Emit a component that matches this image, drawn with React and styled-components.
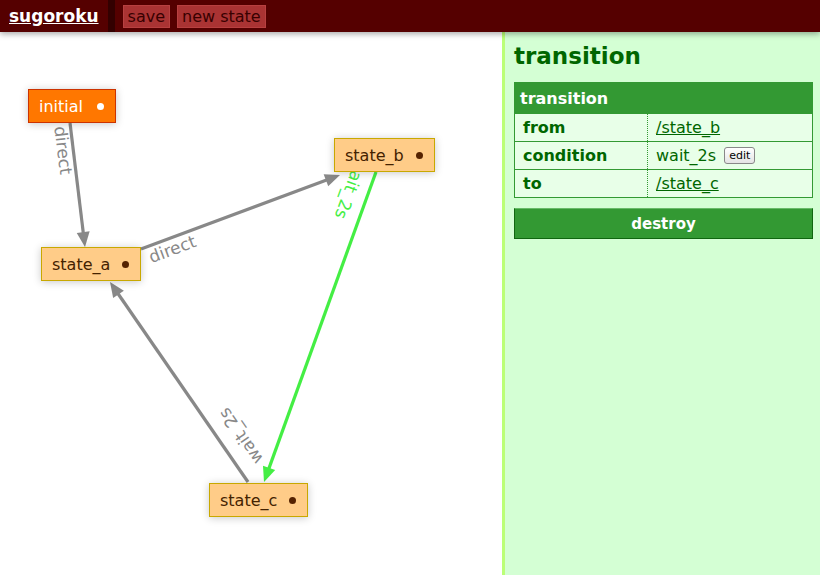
import React from 'react';
import styled, { createGlobalStyle } from 'styled-components';

const GlobalStyle = createGlobalStyle`
  html, body {
    margin: 0;
    padding: 0;
    background: #fff;
  }
  body {
    font-family: "DejaVu Sans", Verdana, sans-serif;
  }
`;

const Page = styled.div`
  width: 820px;
  height: 575px;
  display: flex;
  flex-direction: column;
  overflow: hidden;
`;

const Header = styled.header`
  position: relative;
  z-index: 2;
  height: 32px;
  flex: 0 0 32px;
  background: #550000;
  display: flex;
  align-items: center;
  box-shadow: 0 2px 6px rgba(0, 0, 0, 0.35);
`;

const Brand = styled.a`
  color: #fff;
  font-weight: bold;
  font-size: 17px;
  text-decoration: underline;
  padding: 0 9px 0 9px;
  line-height: 32px;
`;

const Separator = styled.div`
  width: 7px;
  height: 32px;
  background: #330000;
  margin-right: 8px;
`;

const MenuButton = styled.span`
  background: #aa3333;
  color: #380000;
  font-size: 16px;
  height: 23px;
  line-height: 22px;
  padding: 0 4px;
  margin-right: 7px;
  box-sizing: border-box;
  border: 1px solid #b84040;
`;

const Body = styled.div`
  flex: 1;
  display: flex;
  min-height: 0;
`;

const Canvas = styled.div`
  position: relative;
  flex: 0 0 502px;
  background: #fff;
`;

const Edges = styled.svg`
  position: absolute;
  left: 0;
  top: 0;
  width: 502px;
  height: 543px;
`;

const Node = styled.div`
  position: absolute;
  display: flex;
  align-items: center;
  height: 34px;
  box-sizing: border-box;
  padding: 0 11px 0 10px;
  font-size: 16px;
  color: ${p => (p.$initial ? '#fff' : '#442200')};
  background: ${p => (p.$initial ? '#ff7700' : '#ffcc88')};
  border: 1px solid ${p => (p.$initial ? '#cc3300' : '#c8a800')};
  box-shadow: 0 1px 8px rgba(0, 0, 0, 0.22);
  white-space: nowrap;
`;

const Dot = styled.span`
  width: 7px;
  height: 7px;
  border-radius: 50%;
  margin-left: ${p => (p.$initial ? '14px' : '12px')};
  background: ${p => (p.$initial ? '#fff' : '#552200')};
`;

const Panel = styled.aside`
  flex: 1;
  background: #d4ffd4;
  border-left: 3px solid #bbff77;
  padding: 10px 7px 0 9px;
`;

const Title = styled.h1`
  margin: 0 0 12px;
  font-size: 23px;
  line-height: 28px;
  font-weight: bold;
  color: #006600;
`;

const Table = styled.table`
  width: 299px;
  border-collapse: collapse;
  font-size: 16px;
  color: #006600;
`;

const HeadCell = styled.th`
  background: #339933;
  color: #fff;
  text-align: left;
  height: 30px;
  padding: 0 5px;
  border: 1px solid #339933;
`;

const Row = styled.tr`
  background: #e8ffe8;
  height: 28px;
`;

const Label = styled.td`
  width: 116px;
  padding: 0 8px;
  font-weight: bold;
  border: 1px solid #339933;
  border-right: 1px dotted #339933;
`;

const Value = styled.td`
  padding: 0 8px;
  border: 1px solid #339933;
  border-left: 1px dotted #339933;
`;

const Link = styled.a`
  color: #006600;
  text-decoration: underline;
`;

const EditButton = styled.span`
  display: inline-block;
  margin-left: 8px;
  padding: 0 4px;
  height: 15px;
  line-height: 15px;
  font-size: 11px;
  color: #000;
  background: linear-gradient(#fff, #e4e4e4);
  border: 1px solid #888;
  border-radius: 3px;
  vertical-align: 2px;
`;

const DestroyButton = styled.div`
  margin-top: 10px;
  width: 299px;
  height: 31px;
  box-sizing: border-box;
  background: #339933;
  border: 1px solid #116611;
  border-top-color: #66bb66;
  color: #fff;
  font-weight: bold;
  font-size: 15px;
  display: flex;
  align-items: center;
  justify-content: center;
`;

const nodes = [
  { id: 'initial', x: 28, y: 57, initial: true },
  { id: 'state_b', x: 334, y: 106 },
  { id: 'state_a', x: 41, y: 215 },
  { id: 'state_c', x: 209, y: 451 },
];

const edges = [
  { from: [70, 91], to: [85, 215], label: 'direct', color: '#888888', off: 2, drop: 16 },
  { from: [141, 217], to: [340, 143], label: 'direct', color: '#888888', off: 5, drop: 17 },
  { from: [376, 140], to: [264, 450], label: 'wait_2s', color: '#44ee44', off: -8, drop: 24 },
  { from: [248, 450], to: [110, 250], label: 'wait_2s', color: '#888888', off: 10, drop: 26 },
];

const Edge = ({ from, to, label, color, off, drop }) => {
  const dx = to[0] - from[0];
  const dy = to[1] - from[1];
  const len = Math.hypot(dx, dy);
  const ux = dx / len;
  const uy = dy / len;
  const ang = (Math.atan2(dy, dx) * 180) / Math.PI;
  const endX = to[0] - ux * 10;
  const endY = to[1] - uy * 10;
  const hx = to[0] - ux * 15;
  const hy = to[1] - uy * 15;
  const px = -uy * 6.5;
  const py = ux * 6.5;
  return (
    <g>
      <line x1={from[0]} y1={from[1]} x2={endX} y2={endY} stroke={color} strokeWidth="3.2" />
      <polygon
        points={`${to[0]},${to[1]} ${hx + px},${hy + py} ${hx - px},${hy - py}`}
        fill={color}
      />
      <text
        transform={`translate(${from[0]} ${from[1]}) rotate(${ang})`}
        x={off}
        y={drop}
        fill={color}
        fontSize="17"
        fontFamily="DejaVu Sans, sans-serif"
      >
        {label}
      </text>
    </g>
  );
};

export default function App() {
  return (
    <Page>
      <GlobalStyle />
      <Header>
        <Brand>sugoroku</Brand>
        <Separator />
        <MenuButton>save</MenuButton>
        <MenuButton>new state</MenuButton>
      </Header>
      <Body>
        <Canvas>
          <Edges viewBox="0 0 502 543">
            {edges.map((e, i) => (
              <Edge key={i} {...e} />
            ))}
          </Edges>
          {nodes.map(n => (
            <Node key={n.id} $initial={n.initial} style={{ left: n.x, top: n.y }}>
              {n.id}
              <Dot $initial={n.initial} />
            </Node>
          ))}
        </Canvas>
        <Panel>
          <Title>transition</Title>
          <Table>
            <thead>
              <tr>
                <HeadCell colSpan={2}>transition</HeadCell>
              </tr>
            </thead>
            <tbody>
              <Row>
                <Label>from</Label>
                <Value><Link>/state_b</Link></Value>
              </Row>
              <Row>
                <Label>condition</Label>
                <Value>
                  wait_2s<EditButton>edit</EditButton>
                </Value>
              </Row>
              <Row>
                <Label>to</Label>
                <Value><Link>/state_c</Link></Value>
              </Row>
            </tbody>
          </Table>
          <DestroyButton>destroy</DestroyButton>
        </Panel>
      </Body>
    </Page>
  );
}
